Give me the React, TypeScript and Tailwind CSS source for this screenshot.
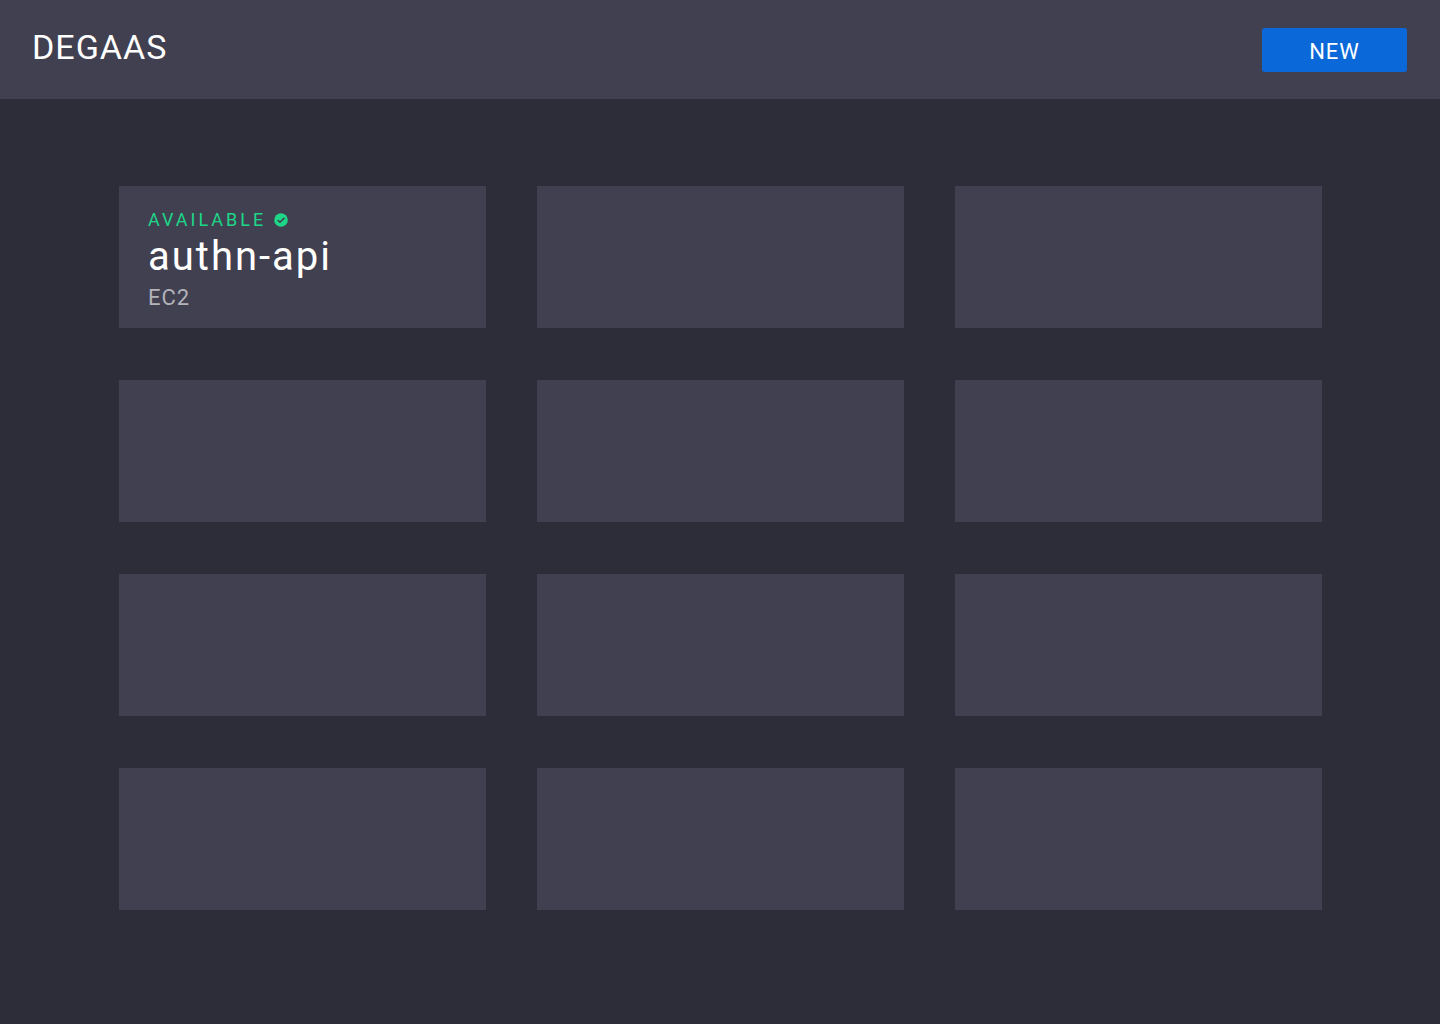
type Service = { name: string; platform: string; status: string };

const slots: (Service | null)[] = [
  { name: "authn-api", platform: "EC2", status: "AVAILABLE" },
  ...Array<null>(11).fill(null),
];

function CheckBadge() {
  return (
    <svg viewBox="0 0 14 14" className="size-3.5" aria-hidden="true">
      <circle cx="7" cy="7" r="6.8" fill="#1dd688" />
      <path d="M3.7 7.1 6 9.3 10.4 4.9" fill="none" stroke="#414051" strokeWidth="1.5" />
    </svg>
  );
}

function Card({ service }: { service: Service | null }) {
  return (
    <li className="min-h-[142px] bg-[#414051] px-[29px] pt-6">
      {service && (
        <>
          <p className="flex items-center gap-2 text-lg leading-5 tracking-[3px] text-[#1dd688]">
            {service.status}
            <CheckBadge />
          </p>
          <h2 className="text-[40px] leading-[54px] tracking-[2px] text-white">{service.name}</h2>
          <p className="text-[22px] leading-7 tracking-[1px] text-[#b3b3ba]">{service.platform}</p>
        </>
      )}
    </li>
  );
}

export default function App() {
  return (
    <div className="min-h-screen bg-[#2d2c39] font-['Roboto',sans-serif]">
      <header className="flex items-start justify-between bg-[#414051] pr-[33px] pl-8 pt-7 pb-[27px]">
        <h1 className="text-[34px] leading-[38px] tracking-[1px] text-white">DEGAAS</h1>
        <button
          type="button"
          className="h-11 w-[145px] rounded-[3px] bg-[#0b68d8] pt-0.5 text-[22px] tracking-[1px] text-white"
        >
          NEW
        </button>
      </header>
      <main className="pr-[118px] pl-[119px] pt-[87px] pb-[114px]">
        <ul className="grid grid-cols-3 gap-x-[51px] gap-y-[52px]">
          {slots.map((service, i) => (
            <Card key={i} service={service} />
          ))}
        </ul>
      </main>
    </div>
  );
}
